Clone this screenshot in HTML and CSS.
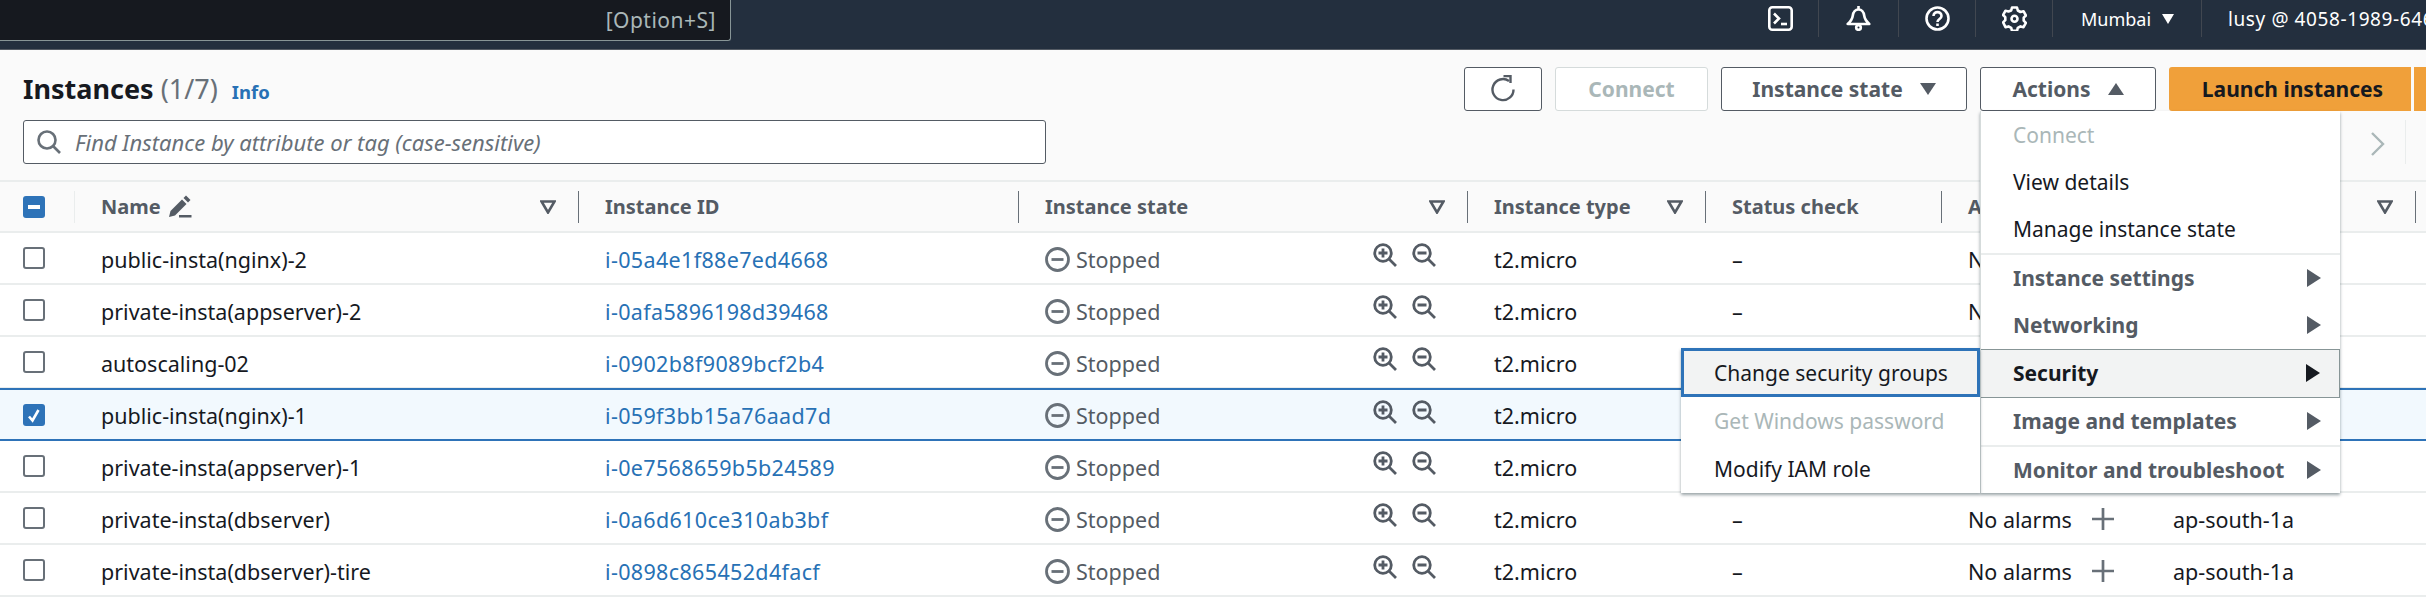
FILE: index.html
```html
<!DOCTYPE html>
<html lang="en">
<head>
    <meta charset="UTF-8">
    <title>Instances | EC2</title>
    <link rel="stylesheet" href="styles.css">
</head>
<body>
    <!-- Top nav -->
    <nav class="topbar">
        <div class="nav-search"><span class="nav-hint">[Option+S]</span></div>
        <div class="nav-right">
            <div class="nav-item nav-icon nav-shell">
                <svg width="25" height="25" viewBox="0 0 25 25" fill="none" stroke="#fff" stroke-width="2.600"><rect x="1.300" y="1.300" width="22.400" height="22.400" rx="3"/><path d="M6 7.500l5 5-5 5"/><path d="M13 18h6"/></svg>
            </div>
            <div class="nav-item nav-icon nav-bell">
                <svg width="25" height="25" viewBox="0 0 25 25" fill="none" stroke="#fff" stroke-width="2.600" stroke-linejoin="round"><path d="M12.500 3.500c-3.800 0-5.300 3-5.800 6.500-.4 3.200-2.200 5.500-5 8h21.600c-2.800-2.500-4.600-4.800-5-8-.5-3.500-2-6.500-5.800-6.500z"/><path d="M12.500 0v3.500"/><circle cx="12.500" cy="21.500" r="2.300"/></svg>
            </div>
            <div class="nav-item nav-icon">
                <svg width="25" height="25" viewBox="0 0 25 25" fill="none" stroke="#fff" stroke-width="2.600"><circle cx="12.500" cy="12.500" r="11"/><path d="M8.500 10c0-5.200 8-5.200 8 0 0 3-4 3-4 6"/><path d="M12.500 17.500v2.500"/></svg>
            </div>
            <div class="nav-item nav-icon">
                <svg width="25" height="25" viewBox="0 0 25 25" fill="none" stroke="#fff" stroke-width="2.600" stroke-linejoin="round"><path d="M10 1.500h5l.8 3 2.700 1.500 3-.8 2.400 4.300-2.200 2.200v3l2.200 2.200-2.400 4.300-3-.8-2.700 1.500-.8 3h-5l-.8-3-2.700-1.500-3 .8L1.100 16.400l2.200-2.200v-3L1.100 9l2.400-4.300 3 .8L9.200 4.500z"/><circle cx="12.500" cy="12.700" r="3"/></svg>
            </div>
            <div class="nav-item nav-region">Mumbai <span class="nav-caret"></span></div>
            <div class="nav-item nav-account">lusy @ 4058-1989-6463</div>
        </div>
    </nav>

    <main>
        <header class="page-head">
            <div class="page-title">
                <h1>Instances <span class="count">(1/7)</span></h1>
                <a class="info">Info</a>
            </div>
            <div class="actions">
                <button class="btn btn-icon">
                    <svg width="28" height="28" viewBox="0 0 28 28" fill="none" stroke="#545b64" stroke-width="2.400"><path d="M20 6a10.500 10.500 0 1 0 4.500 8.500"/><path d="M14.500 1h7v7"/></svg>
                </button>
                <button class="btn btn-connect" disabled>Connect</button>
                <button class="btn btn-state">Instance state <span class="caret-down"></span></button>
                <button class="btn btn-actions">Actions <span class="caret-up"></span></button>
                <button class="btn-primary">Launch instances</button>
                <button class="btn-primary btn-split"></button>
            </div>
        </header>

        <div class="filter-row">
            <div class="filter">
                <svg width="24" height="24" viewBox="0 0 24 24" fill="none" stroke="#687078" stroke-width="2.600"><circle cx="10" cy="10" r="8.500"/><path d="M16 16l7 7"/></svg>
                <span>Find Instance by attribute or tag (case-sensitive)</span>
            </div>
            <div class="pager">
                <svg width="16" height="24" viewBox="0 0 16 24" fill="none" stroke="#aab7b8" stroke-width="2.400"><path d="M2 1l11 11L2 23"/></svg>
            </div>
        </div>

        <section class="table">
            <div class="row head">
                <div class="cell check"><span class="box indeterminate"></span></div>
                <div class="cell">Name
                    <svg class="pencil" width="23" height="23" viewBox="0 0 23 23" fill="#545b64"><path d="M0 22l1.500-6L13 4.500l4.500 4.500L6 20.500z"/><path d="M14.500 3L17 .5 21.500 5 19 7.500z"/><path d="M10 20h12.500v2.500H10z"/></svg>
                    <svg class="filter-tri" width="16" height="14" viewBox="0 0 16 14"><path d="M1.500 1.500h13L8 12.500z"/></svg>
                </div>
                <div class="cell">Instance ID</div>
                <div class="cell">Instance state<svg class="filter-tri" width="16" height="14" viewBox="0 0 16 14"><path d="M1.500 1.500h13L8 12.500z"/></svg></div>
                <div class="cell">Instance type<svg class="filter-tri" width="16" height="14" viewBox="0 0 16 14"><path d="M1.500 1.500h13L8 12.500z"/></svg></div>
                <div class="cell">Status check</div>
                <div class="cell">Alarm status</div>
                <div class="cell cell-zone">Availability Zone<svg class="filter-tri" width="16" height="14" viewBox="0 0 16 14"><path d="M1.500 1.500h13L8 12.500z"/></svg></div>
            </div>
            <div id="rows"></div>
        </section>

        <!-- Actions menu -->
        <div class="menu">
            <div class="menu-group">
                <div class="menu-item disabled">Connect</div>
                <div class="menu-item">View details</div>
                <div class="menu-item">Manage instance state</div>
            </div>
            <div class="menu-group sub">
                <div class="menu-item parent">Instance settings<span class="arrow"></span></div>
                <div class="menu-item parent">Networking<span class="arrow"></span></div>
                <div class="menu-item parent open">Security<span class="arrow"></span></div>
                <div class="menu-item parent">Image and templates<span class="arrow"></span></div>
                <div class="menu-item parent last">Monitor and troubleshoot<span class="arrow"></span></div>
            </div>
        </div>
        <div class="submenu">
            <div class="menu-item focused">Change security groups</div>
            <div class="menu-item disabled">Get Windows password</div>
            <div class="menu-item">Modify IAM role</div>
        </div>
    </main>

    <script>
        // name, id, selected, status check, alarms, zone (blank where the menu covers the cell)
        const instances = [
            ["public-insta(nginx)-2", "i-05a4e1f88e7ed4668", false, "–", "No alarms", ""],
            ["private-insta(appserver)-2", "i-0afa5896198d39468", false, "–", "No alarms", ""],
            ["autoscaling-02", "i-0902b8f9089bcf2b4", false, "", "", ""],
            ["public-insta(nginx)-1", "i-059f3bb15a76aad7d", true, "", "", ""],
            ["private-insta(appserver)-1", "i-0e7568659b5b24589", false, "", "", ""],
            ["private-insta(dbserver)", "i-0a6d610ce310ab3bf", false, "–", "No alarms", "ap-south-1a"],
            ["private-insta(dbserver)-tire", "i-0898c865452d4facf", false, "–", "No alarms", "ap-south-1a"]
        ];

        const zoomIn = '<svg width="24" height="24" viewBox="0 0 24 24" fill="none" stroke="#545b64" stroke-width="2.800"><circle cx="10" cy="10" r="8.300"/><path d="M16 16l7 7M10 5.500v9M5.500 10h9"/></svg>';
        const zoomOut = '<svg width="24" height="24" viewBox="0 0 24 24" fill="none" stroke="#545b64" stroke-width="2.800"><circle cx="10" cy="10" r="8.300"/><path d="M16 16l7 7M5.500 10h9"/></svg>';
        const stopped = '<svg width="25" height="25" viewBox="0 0 25 25" fill="none" stroke="#687078" stroke-width="2.800"><circle cx="12.500" cy="12.500" r="11"/><path d="M6.500 12.500h12"/></svg>';
        const plus = '<svg class="plus" width="24" height="24" viewBox="0 0 24 24" fill="none" stroke="#687078" stroke-width="2.700"><path d="M12 1v22M1 12h22"/></svg>';
        const tick = '<svg width="22" height="22" viewBox="0 0 22 22" fill="none" stroke="#fff" stroke-width="2.600"><path d="M6 11.500l3.500 4L15.500 5"/></svg>';

        document.getElementById("rows").innerHTML = instances.map(([name, id, selected, status, alarms, zone]) => `
            <div class="row${selected ? " selected" : ""}">
                <div class="cell check"><span class="box${selected ? " checked" : ""}">${selected ? tick : ""}</span></div>
                <div class="cell">${name}</div>
                <div class="cell"><a class="link">${id}</a></div>
                <div class="cell cell-state">
                    <span class="status">${stopped}Stopped</span>
                    <span class="zooms">${zoomIn}${zoomOut}</span>
                </div>
                <div class="cell">t2.micro</div>
                <div class="cell">${status}</div>
                <div class="cell">${alarms}${zone ? plus : ""}</div>
                <div class="cell cell-zone">${zone}</div>
            </div>`).join("");
    </script>
</body>
</html>
```
FILE: styles.css
```css
* {
    box-sizing: border-box;
}

body {
    margin: 0;
    background: #fff;
    color: #16191f;
    font-family: "Noto Sans", "Open Sans", Arial, sans-serif;
    font-size: 21.5px;
    overflow: hidden;
}

/* top nav */
.topbar {
    height: 50px;
    background: #232f3e;
    border-bottom: 1px solid #545b64;
    display: flex;
    justify-content: space-between;
    color: #fff;
    overflow: hidden;
}

.nav-search {
    width: 731px;
    height: 41px;
    background: #16191f;
    border: 1px solid #879596;
    border-width: 0 1px 1px 0;
    border-bottom-right-radius: 3px;
    display: flex;
    justify-content: flex-end;
    align-items: center;
    padding-right: 14px;
}

.nav-hint {
    color: #aab7b8;
    font-size: 21px;
    letter-spacing: 0.5px;
}

.nav-right {
    display: flex;
    height: 37px;
    flex: none;
    width: 658px;
}

.nav-item {
    flex: none;
    display: flex;
    align-items: center;
    border-right: 1px solid #414750;
    white-space: nowrap;
}

.nav-icon {
    width: 77px;
    justify-content: center;
}

.nav-shell {
    width: 51px;
    justify-content: flex-start;
}

.nav-bell {
    width: 80px;
}

.nav-region {
    width: 149px;
    padding-left: 28px;
    gap: 11px;
    font-size: 18px;
}

.nav-caret {
    border-left: 6px solid transparent;
    border-right: 6px solid transparent;
    border-top: 10px solid #fff;
}

.nav-account {
    border-right: none;
    padding-left: 26px;
    font-size: 19px;
    letter-spacing: 0.6px;
}

/* page head */
.page-head {
    height: 70px;
    background: #fafafa;
    display: flex;
    justify-content: space-between;
    padding: 17px 0 0 23px;
}

.page-title {
    display: flex;
    align-items: baseline;
    gap: 14px;
    padding-top: 3px;
}

h1 {
    margin: 0;
    font-size: 27px;
    font-weight: 700;
}

.count {
    font-weight: 400;
    color: #687078;
}

.info {
    color: #2771b5;
    font-size: 18.5px;
    font-weight: 700;
}

.actions {
    display: flex;
    gap: 13px;
    width: 962px;
}

.btn {
    height: 44px;
    background: #fff;
    border: 1px solid #545b64;
    border-radius: 3px;
    color: #545b64;
    font: 700 21px "Noto Sans", sans-serif;
    display: flex;
    align-items: center;
    justify-content: center;
    gap: 17px;
    padding: 0;
}

.btn-icon {
    width: 78px;
}

.btn-connect {
    width: 153px;
    border-color: #d5dbdb;
    color: #aab7b8;
}

.btn-state {
    width: 246px;
}

.btn-actions {
    width: 176px;
}

.caret-down,
.caret-up {
    border-left: 8px solid transparent;
    border-right: 8px solid transparent;
}

.caret-down {
    border-top: 12px solid #545b64;
}

.caret-up {
    border-bottom: 12px solid #545b64;
}

.btn-primary {
    width: 242px;
    height: 44px;
    border: none;
    border-radius: 3px 0 0 3px;
    background: #f0a03a;
    color: #16191f;
    font: 700 21px "Noto Sans", sans-serif;
    padding: 0 0 0 5px;
}

.btn-split {
    width: 12px;
    margin-left: -10px;
    border-radius: 0;
}

/* filter row */
.filter-row {
    height: 60px;
    background: #fafafa;
    display: flex;
    justify-content: space-between;
    padding-left: 23px;
}

.filter {
    width: 1023px;
    height: 44px;
    background: #fff;
    border: 1px solid #545b64;
    border-radius: 3px;
    display: flex;
    align-items: center;
    gap: 14px;
    padding-left: 13px;
    color: #687078;
    font-style: italic;
    font-size: 22px;
}

.pager {
    width: 36px;
    height: 44px;
    margin-right: 20px;
    padding-top: 12px;
    border-right: 1px solid #eaeded;
}

/* table */
.table {
    border-top: 2px solid #eaeded;
}

.row {
    display: grid;
    grid-template-columns: 75px 504px 440px 449px 238px 236px 205px 269px;
    height: 52px;
    align-items: center;
    border-bottom: 2px solid #eaeded;
}

.row.head {
    height: 51px;
    background: #fafafa;
    color: #545b64;
    font-size: 20px;
    font-weight: 700;
}

.row.selected {
    background: #f2f9fe;
    border-top: 2px solid #2e73b8;
    border-bottom: 2px solid #2e73b8;
    margin-top: -1px;
    height: 53px;
}

.cell {
    padding-left: 26px;
    padding-top: 2px;
    white-space: nowrap;
    display: flex;
    align-items: center;
    height: 32px;
}

.head .cell {
    position: relative;
    padding-top: 0;
    border-right: 1px solid #687078;
}

.head .check {
    border-right: 1px solid #eaeded;
}

.cell.check {
    padding-left: 23px;
    padding-top: 0;
}

.box {
    width: 22px;
    height: 22px;
    border: 2px solid #687078;
    border-radius: 3px;
    background: #fff;
    display: block;
}

.box.checked,
.box.indeterminate {
    background: #2e73b8;
    border: none;
}

.box.indeterminate {
    padding: 9px 5px;
}

.box.indeterminate::after {
    content: "";
    display: block;
    height: 4px;
    background: #fff;
}

.pencil {
    margin-left: 8px;
}

.filter-tri {
    position: absolute;
    right: 22px;
    top: 9px;
    fill: none;
    stroke: #545b64;
    stroke-width: 2.600;
}

.link {
    color: #2771b5;
    letter-spacing: 0.35px;
}

.cell-state {
    justify-content: space-between;
    padding-right: 32px;
}

.status {
    display: flex;
    align-items: center;
    gap: 6px;
    color: #545b64;
}

.zooms {
    display: flex;
    gap: 15px;
    margin-top: -8px;
}

.plus {
    margin-left: 19px;
}

/* menus */
.menu,
.submenu {
    position: absolute;
    background: #fff;
    box-shadow: 0 2px 3px rgba(0, 28, 36, 0.4);
}

.menu {
    left: 1980px;
    top: 111px;
    width: 360px;
    height: 382px;
    border-left: 1px solid #d5dbdb;
    font-size: 21px;
}

.menu-group.sub {
    border-top: 2px solid #eaeded;
}

.menu-item {
    height: 47.330px;
    padding: 0 19px 0 32px;
    display: flex;
    align-items: center;
    justify-content: space-between;
    white-space: nowrap;
}

.menu-item.disabled {
    color: #aab7b8;
}

.menu-item.parent {
    height: 47px;
    color: #545b64;
    font-weight: 700;
}

.menu-item.parent.open {
    height: 49px;
    background: #f2f3f3;
    border: 1px solid #879596;
    border-left: none;
    color: #16191f;
}

.menu-item.parent.last {
    height: 48px;
    border-top: 2px solid #eaeded;
}

.arrow {
    border-top: 9px solid transparent;
    border-bottom: 9px solid transparent;
    border-left: 14px solid #545b64;
}

.open .arrow {
    border-left-color: #16191f;
}

.submenu {
    left: 1681px;
    top: 348px;
    width: 299px;
    height: 145px;
    font-size: 21px;
}

.submenu .menu-item {
    height: 48px;
    padding-left: 33px;
}

.submenu .menu-item.focused {
    height: 49px;
    background: #f2f3f3;
    border: 3px solid #2e73b8;
    padding-left: 30px;
}
```
